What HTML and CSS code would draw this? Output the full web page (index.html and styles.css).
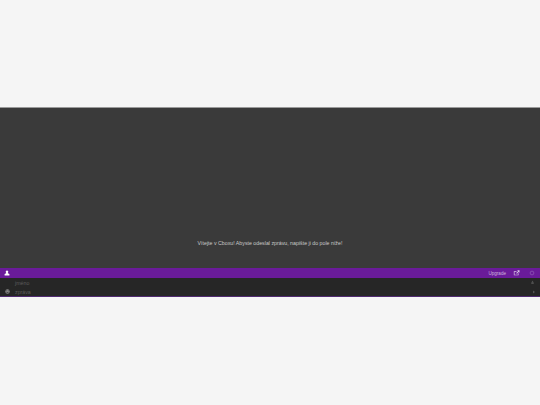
FILE: index.html
```html
<!DOCTYPE html>
<html lang="cs">

<head>
    <meta charset="UTF-8"/>
    <title>Chat</title>
    <link rel="stylesheet" href="styles.css">
</head>

<body>
    <div class="chat">
        <div class="messages">
            <p class="welcome">Vítejte v Cboxu! Abyste odeslal zprávu, napište ji do pole níže!</p>
        </div>
        <div class="toolbar">
            <svg class="user-icon" viewBox="0 0 8 8"><path d="M4 .6a1.7 1.7 0 0 1 1.2 2.9L5.2 4.4 7.2 5.4V7.4H.8V5.4L2.8 4.4V3.5A1.7 1.7 0 0 1 4 .6z"/></svg>
            <span class="upgrade">Upgrade</span>
            <svg class="popout-icon" viewBox="0 0 10 9"><path d="M1 2h4v1H2v4h5V5h1v3H1z"/><path d="M6 .5h3.500V4L8.300 2.900 5.500 5.500 4.700 4.600 7.300 2z"/></svg>
            <svg class="gear-icon" viewBox="0 0 8 8"><circle cx="4" cy="4" r="2.500"/></svg>
        </div>
        <div class="form">
            <div class="form-row">
                <span class="form-field form-name">jméno</span>
                <svg class="key-icon" viewBox="0 0 8 8"><path d="M2 3.500h4v3H2zM3 3.500V2a1 1 0 0 1 2 0v1.500"/></svg>
            </div>
            <div class="form-row">
                <svg class="smiley" viewBox="0 0 8 8"><circle cx="4" cy="4" r="3.500"/><rect x="2.200" y="2.400" width="1.200" height="1.200" class="smiley-eye"/><rect x="4.600" y="2.400" width="1.200" height="1.200" class="smiley-eye"/><rect x="2.400" y="5" width="3.200" height="1" class="smiley-eye"/></svg>
                <span class="form-field">zpráva</span>
                <svg class="send-icon" viewBox="0 0 4 6"><path d="M0 0l4 3-4 3z"/></svg>
            </div>
        </div>
    </div>
</body>

</html>
```

FILE: styles.css
```css
* {
    margin: 0;
    padding: 0;
    box-sizing: border-box;
}

body {
    background: #f5f5f5;
    font-family: "Liberation Sans", Arial, sans-serif;
    padding-top: 107px;
}

svg {
    display: block;
    flex-shrink: 0;
}

.chat {
    height: 190px;
    display: flex;
    flex-direction: column;
    border-top: 1px solid #9a9a9a;
    border-bottom: 1px solid #4f2a70;
    box-shadow: 0 1px 0 #e3d3ee;
}

.messages {
    height: 160px;
    background: #3a3a3a;
    display: flex;
    align-items: flex-end;
    justify-content: center;
    padding-bottom: 21px;
}

.welcome {
    color: #c9c9c9;
    font-size: 5.250px;
    line-height: 8px;
}

.toolbar {
    height: 10px;
    background: #6a1b9a;
    display: flex;
    align-items: center;
    padding: 0 5px 0 4px;
}

.user-icon {
    width: 6px;
    height: 6px;
    fill: #fff;
    margin-right: auto;
}

.upgrade {
    color: #cbb4dd;
    font-size: 4.600px;
    margin-right: 7px;
}

.popout-icon {
    width: 7px;
    height: 6px;
    fill: #d9c6e8;
    margin-right: 9px;
}

.gear-icon {
    width: 6px;
    height: 6px;
    fill: none;
    stroke: #8f5ab5;
}

.form {
    flex: 1;
    background: #262626;
    padding: 0 5px;
}

.form-row {
    height: 9px;
    display: flex;
    align-items: center;
    gap: 5px;
}

.form-name {
    margin-left: 10px;
}

.form-field {
    color: #5c5c5c;
    font-size: 5.250px;
    margin-right: auto;
}

.key-icon {
    width: 5px;
    height: 5px;
    fill: #4e4e4e;
}

.smiley {
    width: 5px;
    height: 5px;
    fill: #8a8a8a;
}

.smiley-eye {
    fill: #262626;
}

.send-icon {
    width: 2px;
    height: 4px;
    fill: #555;
}
```
